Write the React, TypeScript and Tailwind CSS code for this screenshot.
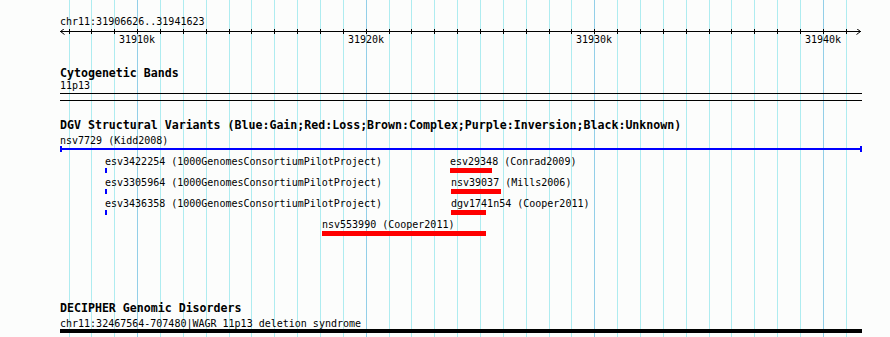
import React from "react";

const START = 31906626;
const END = 31941623;
const xOf = (p: number) => 60 + ((p - START) * 800) / (END - START);
const kbs: number[] = [];
for (let k = 31907; k <= 31941; k++) kbs.push(k);

type Feat = { label: string; x: number; w: number; color: string };

const rows: Feat[][] = [
  [
    { label: "esv3422254 (1000GenomesConsortiumPilotProject)", x: 105, w: 2, color: "#0000ff" },
    { label: "esv29348 (Conrad2009)", x: 450, w: 42, color: "#ff0000" },
  ],
  [
    { label: "esv3305964 (1000GenomesConsortiumPilotProject)", x: 105, w: 2, color: "#0000ff" },
    { label: "nsv39037 (Mills2006)", x: 451, w: 50, color: "#ff0000" },
  ],
  [
    { label: "esv3436358 (1000GenomesConsortiumPilotProject)", x: 105, w: 2, color: "#0000ff" },
    { label: "dgv1741n54 (Cooper2011)", x: 451, w: 35, color: "#ff0000" },
  ],
  [{ label: "nsv553990 (Cooper2011)", x: 322, w: 164, color: "#ff0000" }],
];

function Feature({ f }: { f: Feat }) {
  return (
    <div className="absolute top-0 flex flex-col pt-[3px]" style={{ left: f.x }}>
      <div className="text-[10px] leading-[13px] h-[13px] whitespace-pre">{f.label}</div>
      <div className="h-[5px]" style={{ width: f.w, background: f.color }} />
    </div>
  );
}

export default function App() {
  return (
    <div className="relative w-[890px] h-[337px] overflow-hidden bg-[#fcfdfc] text-black font-['DejaVu_Sans_Mono',monospace]">
      <svg className="absolute inset-0" width={890} height={337}>
        {kbs.map((k) => {
          const x = Math.round(xOf(k * 1000)) + 0.5;
          return (
            <line
              key={k}
              x1={x}
              x2={x}
              y1={0}
              y2={337}
              stroke={k % 10 === 0 ? "#92cfe8" : "#aeecf0"}
              strokeWidth={1}
              shapeRendering="crispEdges"
            />
          );
        })}
      </svg>

      <div className="relative flex flex-col pt-[15px]">
        <div className="pl-[60px] text-[10px] leading-[13px] h-[13px] whitespace-pre">chr11:31906626..31941623</div>

        <svg width={890} height={19} className="block mt-[1px]">
          <line x1={60} x2={861} y1={2.5} y2={2.5} stroke="#000" strokeWidth={1} shapeRendering="crispEdges" />
          <polyline points="64.5,-0.5 60.5,2.5 64.5,5.5" fill="none" stroke="#000" strokeWidth={1} />
          <polyline points="856.5,-0.5 860.5,2.5 856.5,5.5" fill="none" stroke="#000" strokeWidth={1} />
          {kbs.map((k) => {
            const x = Math.round(xOf(k * 1000)) + 0.5;
            return (
              <line key={k} x1={x} x2={x} y1={0} y2={5} stroke="#000" strokeWidth={1} shapeRendering="crispEdges" />
            );
          })}
          {[31910, 31920, 31930, 31940].map((k) => (
            <text
              key={k}
              x={Math.round(xOf(k * 1000))}
              y={14}
              textAnchor="middle"
              fontSize={10}
              fontFamily="'DejaVu Sans Mono', monospace"
              fill="#000"
            >
              {k}k
            </text>
          ))}
        </svg>

        <div className="mt-[19px] pl-[60px] text-[11.6px] leading-[13px] h-[13px] font-bold whitespace-pre">Cytogenetic Bands</div>
        <div className="pl-[60px] text-[10px] leading-[12px] h-[12px] whitespace-pre">11p13</div>
        <div className="mt-[1px] ml-[60px] w-[802px] h-px bg-black" />
        <div className="mt-[6px] ml-[60px] w-[802px] h-px bg-black" />

        <div className="mt-[18px] pl-[60px] text-[11.6px] leading-[13px] h-[13px] font-bold whitespace-pre">
          DGV Structural Variants (Blue:Gain;Red:Loss;Brown:Complex;Purple:Inversion;Black:Unknown)
        </div>
        <div className="mt-[2px] pl-[60px] text-[10px] leading-[13px] h-[12px] whitespace-pre">nsv7729 (Kidd2008)</div>

        <div className="ml-[60px] w-[802px] h-[6px] flex items-center">
          <div className="w-[2px] h-[6px] bg-[#0000ff]" />
          <div className="flex-1 h-[2px] bg-[#0000ff]" />
          <div className="w-[2px] h-[6px] bg-[#0000ff]" />
        </div>

        <div className="flex flex-col">
          {rows.map((row, i) => (
            <div key={i} className="relative h-[21px]">
              {row.map((f) => (
                <Feature key={f.label} f={f} />
              ))}
            </div>
          ))}
        </div>

        <div className="mt-[66px] pl-[60px] text-[11.6px] leading-[13px] h-[13px] font-bold whitespace-pre">DECIPHER Genomic Disorders</div>
        <div className="mt-[2px] pl-[60px] text-[10px] leading-[13px] h-[12px] whitespace-pre">chr11:32467564-707480|WAGR 11p13 deletion syndrome</div>
        <div className="ml-[60px] w-[802px] h-[4px] bg-black" />
      </div>
    </div>
  );
}
